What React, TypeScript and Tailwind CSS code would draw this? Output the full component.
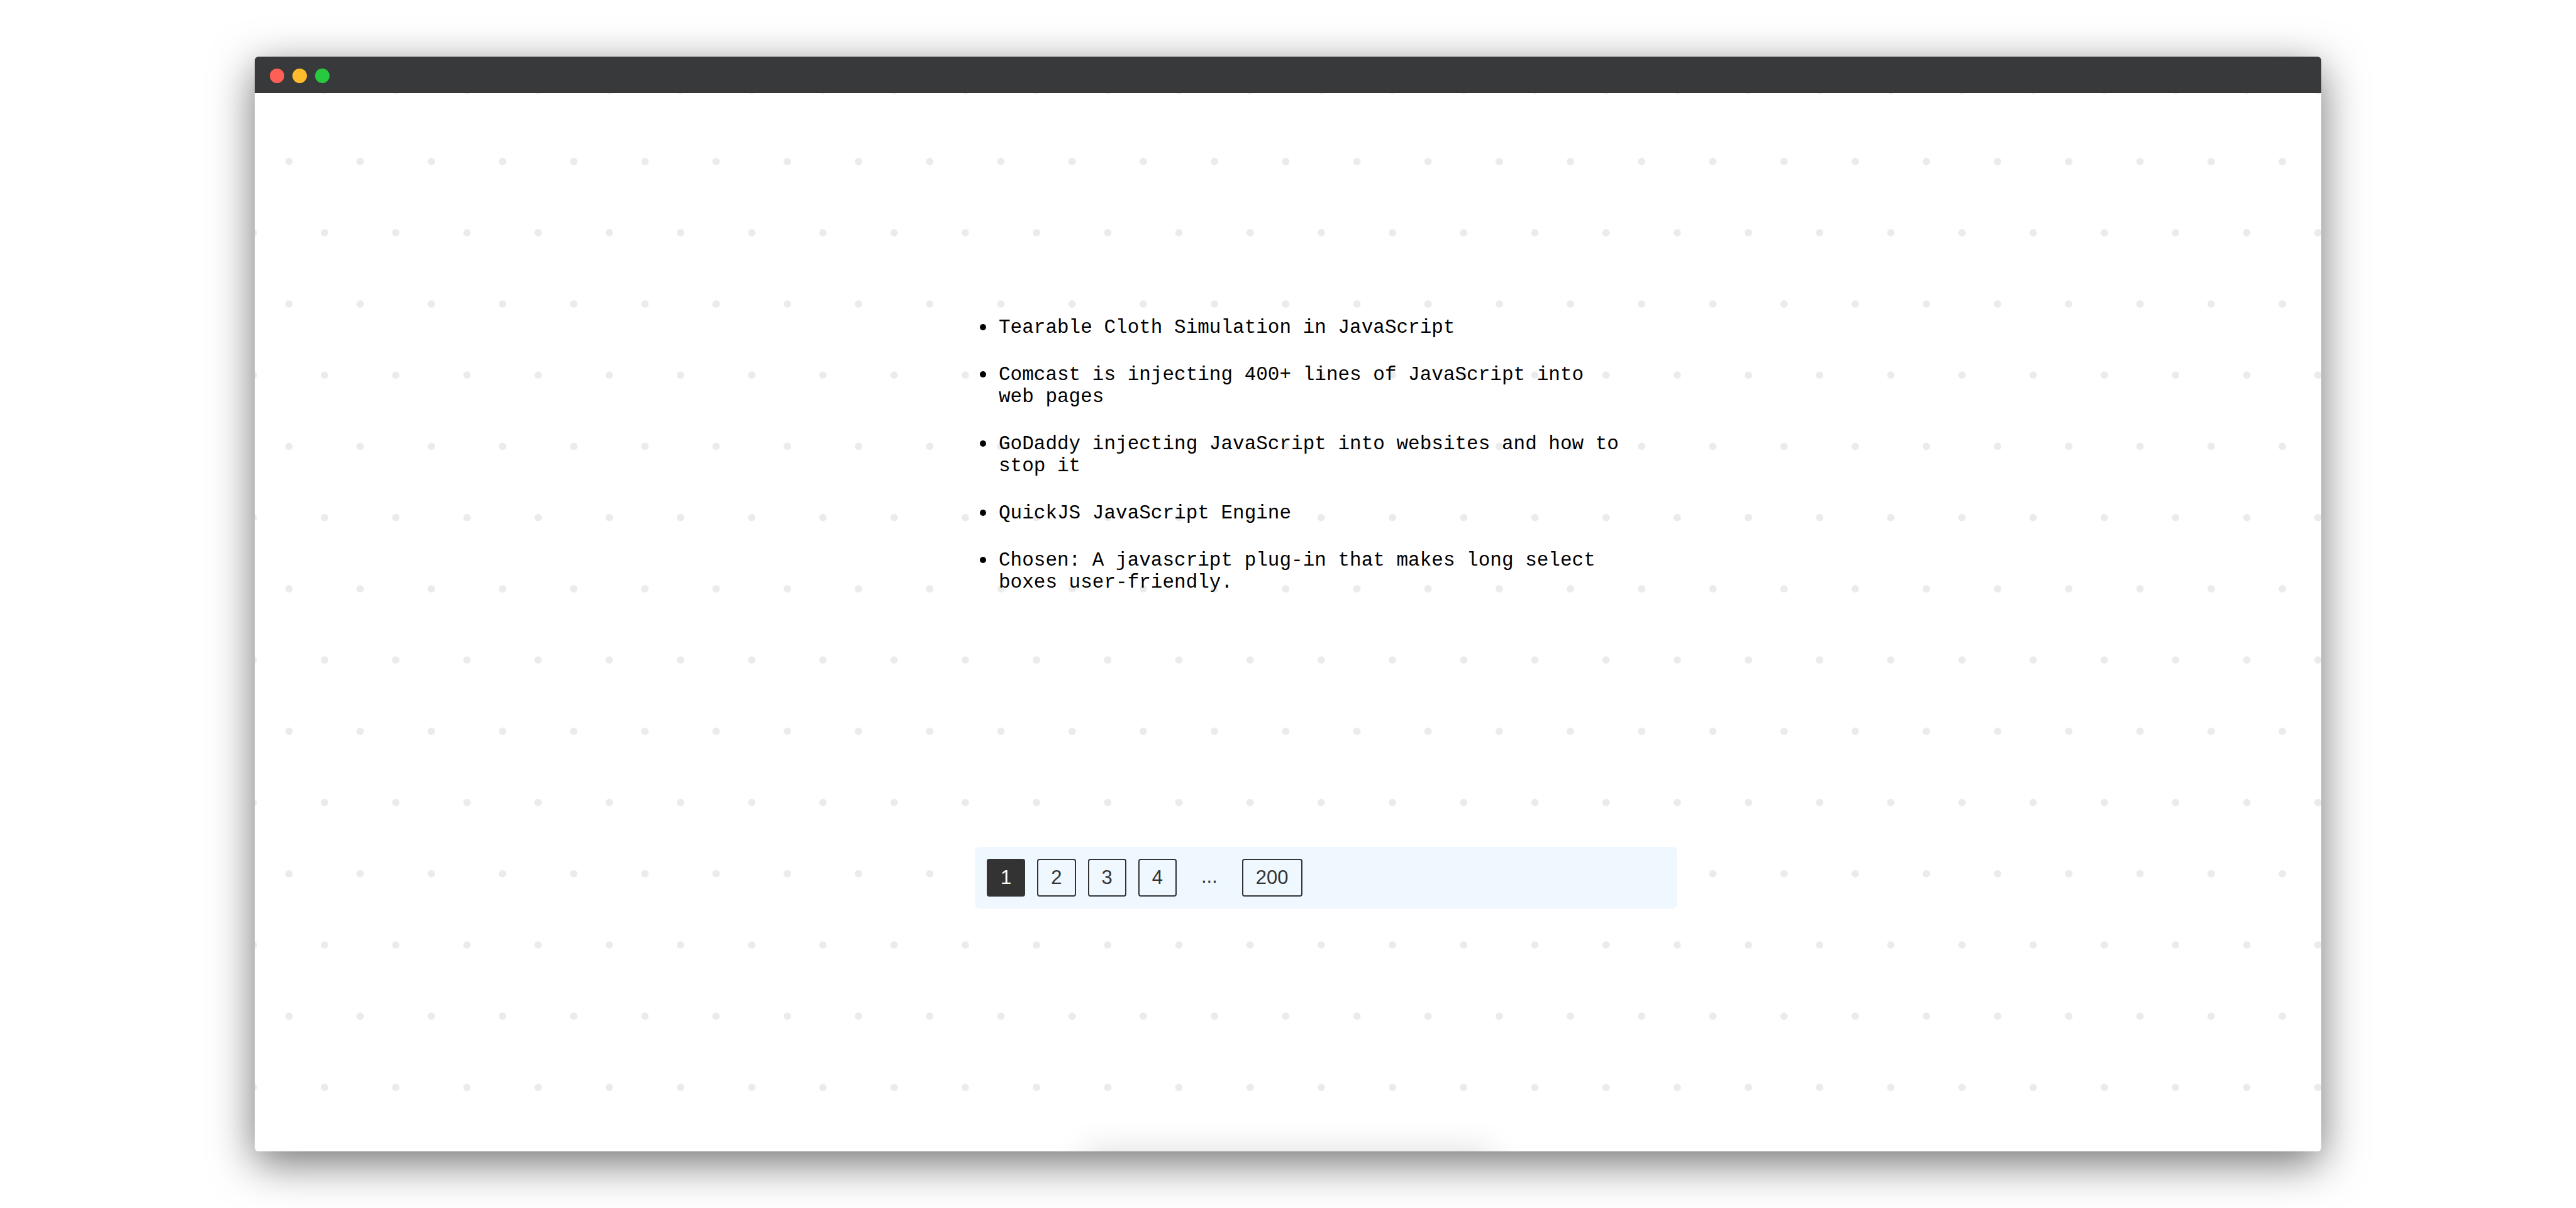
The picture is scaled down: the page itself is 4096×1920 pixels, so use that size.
const headlines = [
  "Tearable Cloth Simulation in JavaScript",
  "Comcast is injecting 400+ lines of JavaScript into web pages",
  "GoDaddy injecting JavaScript into websites and how to stop it",
  "QuickJS JavaScript Engine",
  "Chosen: A javascript plug-in that makes long select boxes user-friendly.",
];

const pages = ["1", "2", "3", "4", "...", "200"];

function TitleBar() {
  return (
    <header className="relative flex gap-[13px] rounded-t-[6px] border-b border-[#3a3335] bg-[#38393a] px-6 pt-[19px] pb-[15px]">
      <button type="button" aria-label="Close" className="size-[23px] rounded-full bg-[#ff5f57]" />
      <button type="button" aria-label="Minimize" className="size-[23px] rounded-full bg-[#ffbd2e]" />
      <button type="button" aria-label="Zoom" className="size-[23px] rounded-full bg-[#28c940]" />
    </header>
  );
}

function DotGrid() {
  return (
    <svg aria-hidden="true" className="absolute inset-0 size-full">
      <defs>
        <pattern id="dots" x="-30" y="-60" width="113.2" height="226.4" patternUnits="userSpaceOnUse">
          <circle cx="84.5" cy="168.7" r="5.9" fill="#ebebeb" />
          <circle cx="27.9" cy="55.5" r="5.9" fill="#ebebeb" />
        </pattern>
      </defs>
      <rect width="100%" height="100%" fill="url(#dots)" />
    </svg>
  );
}

function Headlines() {
  return (
    <ul className="flex max-w-[1038px] flex-col gap-10 pl-2 font-['Liberation_Mono',monospace] text-[31px] leading-[35px] text-black">
      {headlines.map((text) => (
        <li key={text} className="flex gap-5">
          <span className="mt-3 size-[10px] shrink-0 rounded-full bg-black" />
          <span>{text}</span>
        </li>
      ))}
    </ul>
  );
}

function Pagination() {
  return (
    <nav
      aria-label="Pagination"
      className="flex items-start gap-[19px] rounded-[8px] bg-[#eff7ff] p-[19px] font-['Liberation_Sans',Arial,sans-serif] text-[31px] leading-[36px] text-[#333333]"
    >
      {pages.map((page) =>
        page === "..." ? (
          <span key={page} className="px-5 py-[10px]">
            {page}
          </span>
        ) : (
          <button
            key={page}
            type="button"
            aria-current={page === "1" ? "page" : undefined}
            className="rounded-[4px] border-2 border-[#333333] px-5 py-[10px] aria-[current=page]:bg-[#333333] aria-[current=page]:text-white"
          >
            {page}
          </button>
        ),
      )}
    </nav>
  );
}

export default function App() {
  return (
    <div className="flex min-h-screen flex-col overflow-hidden bg-white px-[405px] py-[90px]">
      <div className="flex flex-1 flex-col rounded-[6px] bg-white shadow-[0_18px_68px_rgba(0,0,0,0.56)]">
        <TitleBar />
        <main className="relative flex flex-1 flex-col items-center overflow-hidden rounded-b-[6px] pt-[355px] pl-[121px]">
          <DotGrid />
          <div className="absolute top-full left-1/2 h-40 w-[648px] -translate-x-1/2 shadow-[0_0_54px_rgba(0,0,0,0.14)]" />
          <div className="relative flex w-full max-w-[1117px] flex-col gap-[403px]">
            <Headlines />
            <Pagination />
          </div>
        </main>
      </div>
    </div>
  );
}
